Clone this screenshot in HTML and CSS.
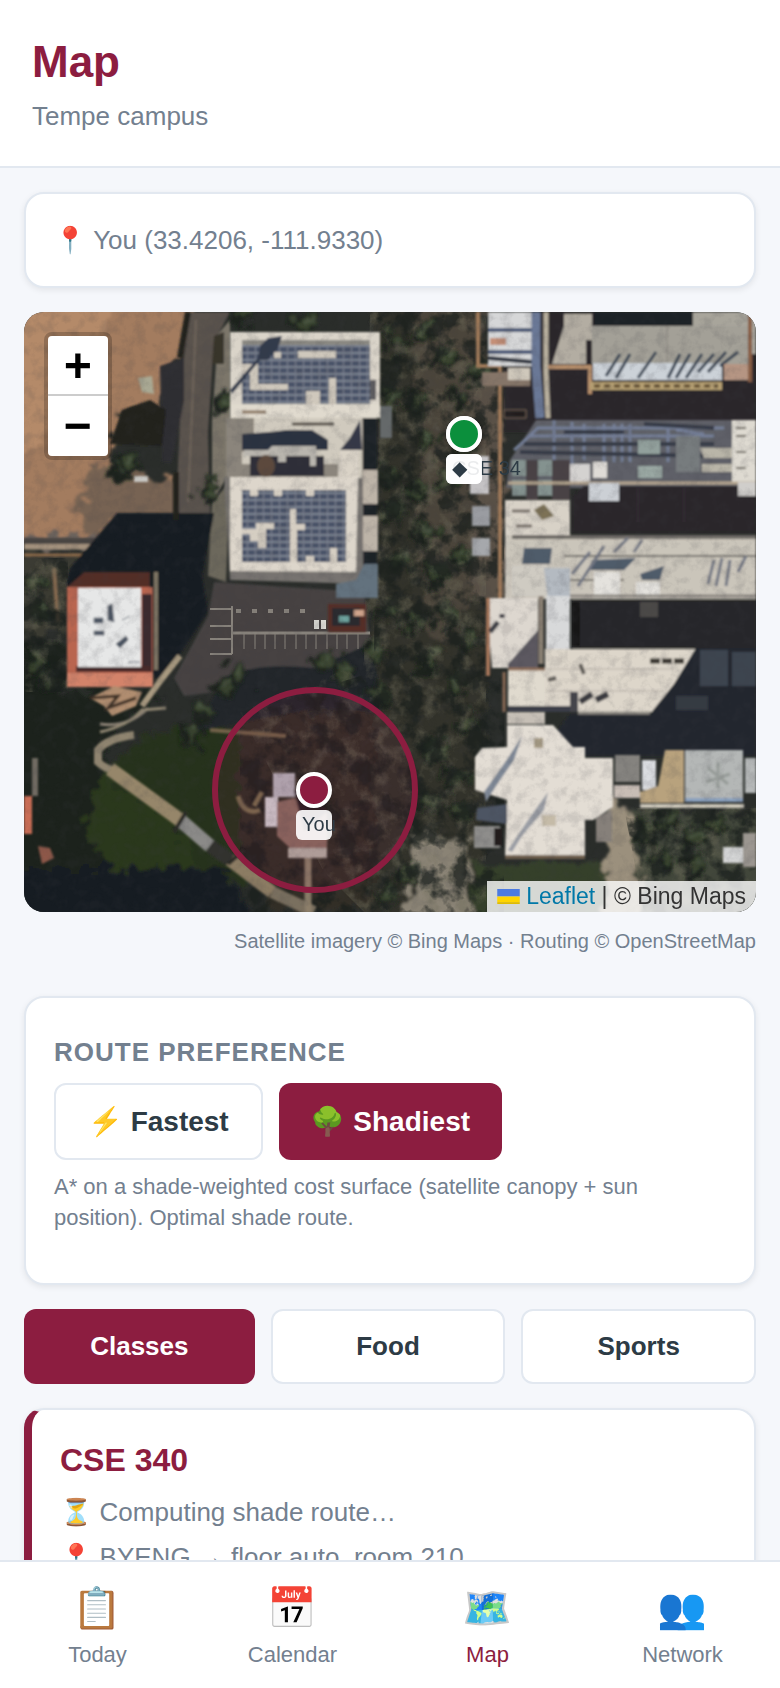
FILE: index.html
```html
<!DOCTYPE html>
<html lang="en">
<head>
    <meta charset="UTF-8">
    <meta name="viewport" content="width=device-width, initial-scale=1.0">
    <title>Map</title>
    <link rel="stylesheet" href="styles.css">
</head>
<body>
    <div class="page">
        <header class="header">
            <h1>Map</h1>
            <p>Tempe campus</p>
        </header>

        <main class="content">
            <div class="card location">📍 You (33.4206, -111.9330)</div>

            <div class="map">
                <svg class="map-tiles" viewBox="0 0 732 600" preserveAspectRatio="xMidYMid slice" aria-hidden="true">
                    <defs>
                        <pattern id="panels" width="8" height="7" patternUnits="userSpaceOnUse">
                            <rect width="8" height="7" fill="#7d8492"/>
                            <rect width="7" height="5" fill="#4a5368"/>
                        </pattern>
                        <filter id="rough" x="-5%" y="-5%" width="110%" height="110%">
                            <feTurbulence type="fractalNoise" baseFrequency="0.07" numOctaves="4" seed="4" result="n"/>
                            <feDisplacementMap in="SourceGraphic" in2="n" scale="30" xChannelSelector="R" yChannelSelector="G"/>
                            <feGaussianBlur stdDeviation="1.5"/>
                        </filter>
                        <filter id="soft" x="-5%" y="-5%" width="110%" height="110%">
                            <feGaussianBlur stdDeviation="0.8"/>
                        </filter>
                        <filter id="grain" x="0" y="0" width="100%" height="100%">
                            <feTurbulence type="fractalNoise" baseFrequency="0.09" numOctaves="4" seed="2"/>
                            <feColorMatrix values="0 0 0 0 0.05  0 0 0 0 0.05  0 0 0 0 0.06  3 0 0 0 -1.3"/>
                        </filter>
                        <filter id="leaves" x="0" y="0" width="100%" height="100%" color-interpolation-filters="sRGB">
                            <feTurbulence type="fractalNoise" baseFrequency="0.06" numOctaves="5" seed="7" result="n"/>
                            <feColorMatrix values="0 0 0 0 0.44  0 0 0 0 0.43  0 0 0 0 0.36  0 3.2 0 0 -1.5" result="c"/>
                            <feComposite in="c" in2="SourceGraphic" operator="in"/>
                        </filter>
                        <filter id="shade" x="0" y="0" width="100%" height="100%" color-interpolation-filters="sRGB">
                            <feTurbulence type="fractalNoise" baseFrequency="0.045" numOctaves="4" seed="21" result="n"/>
                            <feColorMatrix values="0 0 0 0 0.1  0 0 0 0 0.12  0 0 0 0 0.11  0 5 0 0 -2.3" result="c"/>
                            <feComposite in="c" in2="SourceGraphic" operator="in"/>
                        </filter>
                        <g id="tree">
                            <circle r="12" fill="#1c241f"/>
                            <circle cx="2" cy="-2" r="8" fill="#37432f"/>
                            <circle cx="3" cy="-4" r="3" fill="#4a5541"/>
                        </g>
                        <g id="car" fill="#d9d8d2"><rect width="5" height="9"/></g>
                    </defs>

                    <rect width="732" height="600" fill="#2a2d2a"/>

                    <!-- ground -->
                    <g filter="url(#rough)">
                        <path d="M-20-20H172L160 48 144 56 136 92 104 92 88 128 84 150 104 164 152 166 152 208 104 206 84 226 -20 230Z" fill="#a37c5f"/>
                        <path d="M-20-20H100L60 60 30 120-20 150Z" fill="#b48a69"/>
                        <path d="M70 150 150 170 150 206 100 206 70 226 50 200Z" fill="#776353"/>
                        <path d="M-20 224H84L70 236H-20Z" fill="#6a625c"/>
                        <path d="M-20 244H60L46 270 42 320-20 330Z" fill="#3b3a30"/>
                        <path d="M-20 330H44V380L140 380 100 410 80 440 80 600H-20Z" fill="#1d231f"/>
                        <path d="M82 455 130 420 220 412 256 440 250 560 150 590 70 540Z" fill="#26301f"/>
                        <path d="M76 460 150 510 176 560 90 570 60 520Z" fill="#29371f"/>
                        <path d="M0 556H200L240 620H-20Z" fill="#171c20"/>
                        <path d="M216 400H400V600H250L216 540Z" fill="#302e27"/>
                        <path d="M350-20H460V620H350Z" fill="#30312b"/>
                        <path d="M386-20H464V100L450 190 470 230 440 300 420 340 400 300 396 100Z" fill="#4b453a"/>
                        <path d="M446 60H480V290H450Z" fill="#5a5147"/>
                        <path d="M395 520 440 530 446 610H380Z" fill="#8a8374"/>
                        <path d="M446 550H590V610H446Z" fill="#35402a"/>
                        <path d="M585 480 608 500 620 610H580Z" fill="#9b907d"/>
                        <path d="M606 498H740V610H620Z" fill="#42463a"/>
                    </g>

                    <!-- streets and long shadows -->
                    <g filter="url(#soft)">
                        <path d="M166 0H206L190 30 184 120 186 202H152L158 60Z" fill="#5a534d"/>
                        <path d="M172 8 164 190" stroke="#6f655a" stroke-width="2" fill="none"/>
                        <path d="M194 22 206 8V160L188 190 188 110Z" fill="#7c766a"/>
                        <path d="M190 24 200 20V52H188Z" fill="#39342b"/>
                        <path d="M188 190 206 170 202 270 184 264Z" fill="#6c675c"/>
                        <path d="M0 234H92" stroke="#a3917d" stroke-width="7"/>
                        <path d="M0 229H92" stroke="#4a4442" stroke-width="6"/>
                        <path d="M0 243H70" stroke="#8d6b4a" stroke-width="3"/>
                        <path d="M136 54 160 46 160 88 148 150H138Z" fill="#2e2d33"/>
                        <path d="M164 0 156 46" stroke="#20221f" stroke-width="6"/>
                        <path d="M98 98 126 88 142 98 138 134 86 132Z" fill="#20211f"/>
                        <path d="M93 201H190L178 264 184 300 136 372 128 360V276L42 274 46 256Z" fill="#191d22"/>
                        <path d="M152 160V208" stroke="#24211f" stroke-width="6"/>
                        <path d="M190 270 340 280 350 360 160 384 150 366 184 304Z" fill="#464343"/>
                        <path d="M30 256 34 310" stroke="#85694f" stroke-width="4"/>
                        <path d="M132 260V358" stroke="#7e7464" stroke-width="4"/>
                        <path d="M156 344 134 372 118 394" stroke="#a89a80" stroke-width="6" fill="none"/>
                        <path d="M114 66 128 64 130 82 118 80Z" fill="#a9a893"/>
                        <path d="M110 164H124V170H110Z" fill="#c7c6c2"/>
                        <path d="M200 366Q230 350 290 356L350 330 356 400 290 396 170 420Z" fill="#22272a"/>
                    </g>

                    <!-- trees -->
                    <g filter="url(#rough)">
                        <use href="#tree" x="98" y="156"/><use href="#tree" x="106" y="150"/>
                        <use href="#tree" x="202" y="90"/><use href="#tree" x="184" y="180"/>
                        <use href="#tree" x="280" y="10"/><use href="#tree" x="220" y="6"/>
                        <use href="#tree" x="10" y="350"/><use href="#tree" x="26" y="370"/>
                        <use href="#tree" x="12" y="270"/><use href="#tree" x="16" y="300"/>
                        <use href="#tree" x="200" y="375"/><use href="#tree" x="214" y="362"/>
                        <use href="#tree" x="180" y="400"/><use href="#tree" x="166" y="420"/>
                        <use href="#tree" x="300" y="350"/><use href="#tree" x="320" y="360"/>
                        <use href="#tree" x="350" y="340"/><use href="#tree" x="356" y="380"/>
                        <use href="#tree" x="372" y="30"/><use href="#tree" x="366" y="90"/>
                        <use href="#tree" x="364" y="160"/><use href="#tree" x="368" y="200"/>
                        <use href="#tree" x="376" y="250"/><use href="#tree" x="364" y="300"/>
                        <use href="#tree" x="400" y="20"/><use href="#tree" x="424" y="44"/>
                        <use href="#tree" x="396" y="88"/><use href="#tree" x="436" y="84"/>
                        <use href="#tree" x="404" y="130"/><use href="#tree" x="392" y="180"/>
                        <use href="#tree" x="424" y="168"/><use href="#tree" x="400" y="220"/>
                        <use href="#tree" x="436" y="244"/><use href="#tree" x="410" y="262"/>
                        <use href="#tree" x="390" y="310"/><use href="#tree" x="424" y="304"/>
                        <use href="#tree" x="446" y="326"/><use href="#tree" x="404" y="350"/>
                        <use href="#tree" x="432" y="374"/><use href="#tree" x="442" y="412"/>
                        <use href="#tree" x="410" y="440"/><use href="#tree" x="430" y="468"/>
                        <use href="#tree" x="404" y="488"/><use href="#tree" x="436" y="500"/>
                        <use href="#tree" x="384" y="560"/><use href="#tree" x="364" y="586"/>
                        <use href="#tree" x="620" y="520"/><use href="#tree" x="644" y="510"/>
                        <use href="#tree" x="668" y="524"/><use href="#tree" x="690" y="514"/>
                        <use href="#tree" x="640" y="548"/><use href="#tree" x="670" y="554"/>
                        <use href="#tree" x="440" y="140"/><use href="#tree" x="454" y="60"/>
                    </g>
                    <g filter="url(#leaves)" opacity="0.45">
                        <path d="M346 0H462V600H340L300 560 216 400 340 350Z"/>
                        <path d="M600 496H732V600H620Z"/>
                        <path d="M0 246H44V380H0Z"/>
                    </g>
                    <g filter="url(#shade)" opacity="0.75">
                        <path d="M352 0H480V600H216V400L350 360Z"/>
                        <path d="M600 496H732V600H620Z"/>
                        <path d="M0 246H44V380H0Z"/>
                    </g>

                    <!-- solar roofs on the west side -->
                    <g filter="url(#soft)">
                        <path d="M202 106H342V170H202Z" fill="#8b857c"/>
                        <path d="M200 165H340V272L206 268Z" fill="#77736f"/>
                        <rect x="206" y="20" width="150" height="86" fill="#dad4c9"/>
                        <rect x="218" y="33" width="128" height="59" fill="url(#panels)"/>
                        <path d="M218 28H346V33H218Z" fill="#8a8882"/>
                        <path d="M274 39H312V46H274ZM250 40H257V46H250ZM218 52H234V72H264V78H226V62H218ZM305 66H312V92H305ZM282 79H296V92H282Z" fill="#cfc8bc"/>
                        <path d="M206 78 234 46 236 34 244 26 258 24 254 36 244 48 236 48 208 82Z" fill="#333a4c"/>
                        <path d="M346 68H352V88H346Z" fill="#5d5c5e"/>
                        <rect x="206" y="92" width="150" height="14" fill="#e0dace"/>
                        <path d="M218 100H242" stroke="#8a7663" stroke-width="3"/>
                        <path d="M230 106H338V166H314V152H218V140H230Z" fill="#d0cabe"/>
                        <path d="M218 122 246 120 262 118 288 118 304 128 304 138 218 138Z" fill="#2b313f"/>
                        <path d="M226 144H300V164H226Z" fill="#2d2f38"/>
                        <path d="M220 138H244L248 134H292V154H286V144H262V150H254V144H220Z" fill="#b9b5ae"/>
                        <ellipse cx="242" cy="154" rx="9" ry="11" fill="#5c4a3d"/>
                        <path d="M336 108 338 138H316L326 126Z" fill="#343947"/>
                        <path d="M268 112H310" stroke="#56504a" stroke-width="3"/>
                        <path d="M316 138H334V178H316Z" fill="#dad3c7"/>
                        <path d="M206 165H334L332 260 206 259Z" fill="#ddd6cb"/>
                        <rect x="218" y="178" width="104" height="72" fill="url(#panels)"/>
                        <path d="M226 178H234V184H226ZM250 178H258V184H250ZM282 178H290V184H282ZM266 197H272V212H281V218H273V250H266ZM218 217H232V211H250V217H242V236H234V229H226V222H218ZM306 236H313V250H306ZM282 244H290V250H282Z" fill="#d5cec2"/>
                        <rect x="339" y="106" width="14" height="170" fill="#1f2327"/>
                        <rect x="339" y="158" width="15" height="34" fill="#bdb4a8"/>
                        <rect x="339" y="204" width="15" height="35" fill="#bdb4a8"/>
                        <path d="M340 252H354V286H312V272L332 268Z" fill="#64727e"/>
                        <rect x="356" y="94" width="12" height="32" fill="#65696a"/>
                    </g>

                    <!-- red roof -->
                    <g filter="url(#soft)">
                        <path d="M43 275 60 260H126V276H43Z" fill="#532d28"/>
                        <rect x="43" y="275" width="86" height="99" fill="#b9654f"/>
                        <rect x="118" y="282" width="10" height="78" fill="#3b2a2e"/>
                        <rect x="52" y="354" width="74" height="6" fill="#4a2a2a"/>
                        <rect x="43" y="361" width="86" height="14" fill="#d3836a"/>
                        <rect x="54" y="276" width="63" height="79" fill="#e6e7e7"/>
                        <path d="M84 294 88 292 90 310 84 308ZM70 306H79V311H70ZM70 319H80V323H70ZM92 332 102 324 104 328 96 336ZM98 308 106 304M104 350H116" fill="#4a5260" stroke="#6e747e"/>
                        <path d="M66 386 90 374 118 380 112 394 88 404 80 394Z" fill="#b08d6f"/>
                        <path d="M66 386 94 384 84 396 112 386" stroke="#3f3026" stroke-width="3" fill="none"/>
                        <path d="M76 412Q104 416 124 396" stroke="#8d8376" stroke-width="3" fill="none"/>
                        <path d="M142 396 118 398Q104 414 76 420" stroke="#908672" stroke-width="3" fill="none"/>
                        <path d="M0 484H8V522H0Z" fill="#c96d54"/>
                        <rect x="8" y="446" width="6" height="38" fill="#6f6a62"/>
                        <path d="M14 534 26 536 30 546 18 552Z" fill="#8f584a"/>
                    </g>

                    <!-- parking lot -->
                    <g stroke="#87827b" stroke-width="1" fill="none">
                        <path d="M208 294V342M186 297H208M186 314H208M186 327H208M186 342H208" stroke-width="2"/>
                        <path d="M208 321H346" stroke-width="3"/>
                        <path d="M220 322V337M231 322V337M241 322V337M251 322V337M261 322V337M272 322V337M282 322V337M292 322V337M303 322V337M313 322V337M323 322V337M334 322V337"/>
                        <path d="M212 299H292" stroke-width="4" stroke-dasharray="5 11"/>
                    </g>
                    <use href="#car" x="290" y="308"/><use href="#car" x="297" y="308"/>
                    <g filter="url(#soft)">
                        <rect x="304" y="292" width="38" height="28" fill="#572e25"/>
                        <rect x="308" y="296" width="28" height="18" fill="#2c2c2e"/>
                        <path d="M315 304H325V310H315Z" fill="#6fa5a0"/>
                        <path d="M330 298H340V304H330Z" fill="#d0a48c"/>
                    </g>

                    <!-- lawn walk and house -->
                    <g filter="url(#soft)">
                        <path d="M110 423Q84 426 74 438V450Q82 458 92 458" stroke="#8f8470" stroke-width="8" fill="none"/>
                        <path d="M86 457 156 508" stroke="#96866a" stroke-width="14"/>
                        <path d="M156 508 186 534" stroke="#8b8a88" stroke-width="14"/>
                        <path d="M206 548 248 580" stroke="#8c7c63" stroke-width="13"/>
                        <path d="M248 580 290 600" stroke="#7a705f" stroke-width="12"/>
                        <path d="M186 534 206 548" stroke="#33332f" stroke-width="14"/>
                        <path d="M150 520 162 500M204 552 220 538" stroke="#2b2a28" stroke-width="4"/>
                        <path d="M186 418 262 424" stroke="#75644a" stroke-width="4"/>
                        <path d="M230 494 238 480M214 484Q220 504 236 498" stroke="#7c6d50" stroke-width="5" fill="none"/>
                        <rect x="249" y="461" width="22" height="24" fill="#b4b0b8"/>
                        <rect x="241" y="485" width="13" height="30" fill="#d0ccd0"/>
                        <path d="M253 490 270 486 303 500V536H266L253 524Z" fill="#8a6a60"/>
                        <path d="M270 478 292 480 303 500 280 520Z" fill="#2d2426"/>
                        <rect x="264" y="536" width="39" height="10" fill="#b3aba2"/>
                        <path d="M284 546V600" stroke="#8d7f6a" stroke-width="7"/>
                    </g>

                    <!-- north-east roofs -->
                    <g filter="url(#soft)">
                        <path d="M480 0H732V120H480Z" fill="#29272a"/>
                        <path d="M454 0V54H476V290" stroke="#a07a5a" stroke-width="4" fill="none"/>
                        <rect x="464" y="0" width="46" height="54" fill="#d6d7d8"/>
                        <path d="M464 18H508M464 40H512" stroke="#4b5a78" stroke-width="4"/>
                        <path d="M464 46 508 50" stroke="#2b303c" stroke-width="4"/>
                        <path d="M466 26H482V33H466Z" fill="#c48f77"/>
                        <path d="M458 60H506V74H458Z" fill="#857567"/>
                        <path d="M484 56H506V68H484Z" fill="#cfc8bb"/>
                        <path d="M480 98H502V106H480Z" fill="#231d1c" stroke="#7d6b5c"/>
                        <path d="M512 0V54L516 106" stroke="#6b7896" stroke-width="9" fill="none"/>
                        <path d="M522 0V60L524 106" stroke="#b9b09f" stroke-width="5" fill="none"/>
                        <path d="M528 52 540 14V2H568V28H562V52Z" fill="#b3ada2"/>
                        <path d="M568 14H726V52H568Z" fill="#a3a097"/>
                        <path d="M669 0H732V14H669Z" fill="#a8a59b"/>
                        <path d="M728 14H732V42H728Z" fill="#a8a59b"/>
                        <rect x="570" y="0" width="98" height="13" fill="#1f2326"/>
                        <path d="M524 55H566V82" stroke="#b58e6c" stroke-width="4" fill="none"/>
                        <rect x="569" y="51" width="129" height="17" fill="#ccd2d8"/>
                        <path d="M582 64 596 42M592 66 606 42M614 66 632 40M644 66 656 42M652 66 666 42M662 66 678 42M674 60 690 42M684 60 702 40M696 54 714 40" stroke="#3b4655" stroke-width="3"/>
                        <path d="M566 74H698" stroke="#b59f72" stroke-width="8"/>
                        <path d="M570 74H694" stroke="#5c4a2e" stroke-width="3" stroke-dasharray="6 4"/>
                        <rect x="700" y="52" width="24" height="16" fill="#b59583"/>
                        <path d="M726 0V70" stroke="#8a5f45" stroke-width="4"/>
                        <path d="M643 14V51" stroke="#87847c"/>
                    </g>

                    <!-- service roof with pipes -->
                    <g filter="url(#soft)">
                        <path d="M486 148 512 108H732V176H482Z" fill="#5f6067"/>
                        <path d="M490 138 514 116H700M506 124H690M530 108V150M548 110V160M560 112V148M580 112V150M590 112V150M598 112V150M606 112V150M644 114V150M652 118 680 122" stroke="#747f98" stroke-width="3" fill="none"/>
                        <path d="M500 132H690M496 140 690 144M540 120H600M620 112 690 116" stroke="#363a46" stroke-width="4"/>
                        <path d="M502 148H514V188H502ZM528 148H546V188H528Z" fill="#4a4244"/>
                        <path d="M488 148H502V164H488ZM514 148H528V164H514ZM488 168H502V184H488ZM514 168H528V184H514Z" fill="#84928f"/>
                        <rect x="614" y="128" width="22" height="14" fill="#92a09c"/>
                        <rect x="614" y="154" width="24" height="12" fill="#9aa8a3"/>
                        <rect x="652" y="124" width="24" height="36" fill="#777b7e"/>
                        <rect x="546" y="152" width="20" height="20" fill="#d4d2d0"/>
                        <rect x="569" y="150" width="14" height="16" fill="#dedbd6"/>
                        <path d="M676 136H712V146H680ZM678 152H710V160H678Z" fill="#b9b5a8"/>
                        <path d="M708 108H732V172H708Z" fill="#dedad1"/>
                        <path d="M712 116H722M712 124H722M712 140H722M712 156H722" stroke="#6d675f" stroke-width="2"/>
                        <path d="M484 171H732" stroke="#b6a68f" stroke-width="3"/>
                        <rect x="446" y="144" width="19" height="38" fill="#c4c2c4"/>
                        <rect x="448" y="194" width="18" height="20" fill="#9a9ca1"/>
                        <rect x="448" y="226" width="18" height="18" fill="#a6a8ac"/>
                        <path d="M548 184 560 174H732V221H548Z" fill="#2a2629"/>
                        <rect x="565" y="171" width="30" height="18" fill="#ccd0d5"/>
                        <rect x="714" y="170" width="18" height="14" fill="#d0cecb"/>
                        <path d="M614 176V210M660 176V210" stroke="#39333a"/>
                    </g>

                    <!-- long central building -->
                    <g filter="url(#soft)">
                        <rect x="481" y="188" width="65" height="38" fill="#d8d2c7"/>
                        <path d="M510 198 520 192 530 204 518 208Z" fill="#7d7257"/>
                        <path d="M488 199H506M492 214H508" stroke="#77706a" stroke-width="3"/>
                        <rect x="481" y="223" width="251" height="64" fill="#cac5ba"/>
                        <path d="M488 225H732" stroke="#706c67" stroke-width="4"/>
                        <path d="M500 236H528L526 252H498ZM568 248 612 246 600 258H566ZM616 262 640 254 636 268H618Z" fill="#505b6b"/>
                        <path d="M540 244H732M546 268H600" stroke="#77746e" stroke-width="2"/>
                        <path d="M548 262 566 240M554 274 580 234M590 240 604 226M610 240 618 228M684 272 690 248M692 274 698 246M702 274 706 248M714 260 722 244" stroke="#757985" stroke-width="3"/>
                        <rect x="570" y="260" width="26" height="26" fill="#e4e2dd"/>
                        <rect x="612" y="270" width="24" height="16" fill="#e4e2dd"/>
                        <rect x="488" y="254" width="38" height="30" fill="#cfcbc2"/>
                        <path d="M520 256H546V288H524Z" fill="#b4bac1"/>
                        <path d="M546 284H732" stroke="#8c8781" stroke-width="3"/>
                        <path d="M548 288H732V336H548Z" fill="#25252a"/>
                        <path d="M548 290H556V334H548Z" fill="#161618"/>
                        <rect x="616" y="290" width="18" height="15" fill="#4b4946"/>
                        <path d="M462 286H514V356H468Z" fill="#ddd7cf"/>
                        <path d="M464 286V364" stroke="#a5765a" stroke-width="4"/>
                        <path d="M484 352 514 318V356H484Z" fill="#5b5961"/>
                        <path d="M517 284V352" stroke="#8b8074" stroke-width="5"/>
                        <rect x="522" y="284" width="24" height="54" fill="#d8d9da"/>
                        <path d="M474 310 466 320M478 302V306" stroke="#3f4147" stroke-width="5"/>
                        <path d="M521 337H732V400H521Z" fill="#ddd6ca"/>
                        <path d="M523 357H650M522 379H640" stroke="#b7b1a8" stroke-width="1"/>
                        <path d="M626 349H662" stroke="#38342f" stroke-width="5" stroke-dasharray="10 2"/>
                        <path d="M556 390 568 382M572 388 584 382" stroke="#3a3a3f" stroke-width="6"/>
                        <path d="M556 352 560 362M524 368 532 366" stroke="#64605c" stroke-width="4"/>
                        <rect x="484" y="358" width="37" height="36" fill="#e0dace"/>
                        <path d="M484 357H521M480 360V400" stroke="#8d6d57" stroke-width="3"/>
                        <path d="M484 394H546V400H484Z" fill="#3a3d47"/>
                        <path d="M546 380H554V400H546Z" fill="#45454c"/>
                        <path d="M672 336H732V444H556L532 420 546 402H626L650 372Z" fill="#22262d"/>
                        <path d="M676 338H704V374H676ZM708 340H732V374H708Z" fill="#3c444f"/>
                        <path d="M652 384H684V398H652Z" fill="#343b43"/>
                        <path d="M554 401H626" stroke="#8e8a83" stroke-width="3"/>
                    </g>

                    <!-- south-east building -->
                    <g filter="url(#soft)">
                        <path d="M483 400H521V412H483Z" fill="#c6bfb6"/>
                        <path d="M483 413H529L549 435H561V446H589V495L569 508H561V543H481L483 488 451 478V445L458 436 483 435Z" fill="#e3ddd4"/>
                        <path d="M460 480 484 446 498 424 490 448 472 474 462 490Z" fill="#7f8896"/>
                        <path d="M453 496 483 492 483 512 452 508Z" fill="#4d5564"/>
                        <path d="M484 538 504 508 524 480 520 498 498 524 488 540Z" fill="#9a9da4"/>
                        <rect x="510" y="426" width="9" height="10" fill="#a89d86"/>
                        <rect x="518" y="503" width="14" height="11" fill="#c5bba8"/>
                        <path d="M481 545H561" stroke="#70604f" stroke-width="4"/>
                        <path d="M450 514H476V536H450Z" fill="#8e8d8b"/>
                        <path d="M470 516H478V534H470Z" fill="#241e1c"/>
                        <path d="M572 506 588 498V530H572Z" fill="#86807a"/>
                        <rect x="591" y="443" width="25" height="27" fill="#85837f"/>
                        <rect x="618" y="448" width="14" height="30" fill="#dadce0"/>
                        <rect x="590" y="473" width="26" height="13" fill="#c8bdb5"/>
                        <path d="M641 438H660V491H616V480L634 474Z" fill="#b8a27d"/>
                        <rect x="661" y="438" width="58" height="50" fill="#b4b7b6"/>
                        <path d="M694 450V476M682 470 706 462M684 456 704 472" stroke="#969b98" stroke-width="3"/>
                        <path d="M661 488H719" stroke="#8aa0be" stroke-width="4"/>
                        <path d="M616 494H720" stroke="#cfc9bc" stroke-width="4"/>
                        <path d="M721 446H732V481H721Z" fill="#b6b9b9"/>
                        <rect x="699" y="535" width="22" height="16" fill="#d5d6d6"/>
                        <rect x="719" y="521" width="13" height="34" fill="#9b9690"/>
                    </g>

                    <rect width="732" height="600" filter="url(#grain)" opacity="0.13"/>

                    <circle cx="291" cy="478" r="100" fill="#8c1d40" fill-opacity="0.1" stroke="#8c1d40" stroke-width="6"/>
                </svg>

                <div class="zoom">
                    <button type="button" aria-label="Zoom in">+</button>
                    <button type="button" aria-label="Zoom out">−</button>
                </div>

                <div class="marker marker-class">
                    <span class="dot dot-green"></span>
                    <span class="marker-label">CSE 34</span>
                </div>
                <div class="marker marker-class">
                    <span class="dot dot-green"></span>
                    <span class="marker-label">◆</span>
                </div>
                <div class="marker marker-you">
                    <span class="dot dot-maroon"></span>
                    <span class="marker-label">You</span>
                </div>

                <div class="attribution">
                    <svg class="flag" viewBox="0 0 12 8" aria-hidden="true"><path fill="#4C7BE1" d="M0 0h12v4H0z"/><path fill="#FFD500" d="M0 4h12v3H0z"/><path fill="#E0BC00" d="M0 7h12v1H0z"/></svg>
                    <a href="#leaflet">Leaflet</a> | © Bing Maps
                </div>
            </div>
            <p class="credits">Satellite imagery © Bing Maps · Routing © OpenStreetMap</p>

            <section class="card route">
                <h2>Route preference</h2>
                <div class="route-options">
                    <button type="button" class="option">⚡ Fastest</button>
                    <button type="button" class="option active">🌳 Shadiest</button>
                </div>
                <p>A* on a shade-weighted cost surface (satellite canopy + sun position). Optimal shade route.</p>
            </section>

            <div class="tabs">
                <button type="button" class="tab active">Classes</button>
                <button type="button" class="tab">Food</button>
                <button type="button" class="tab">Sports</button>
            </div>

            <article class="card class-card">
                <h3>CSE 340</h3>
                <p>⏳ Computing shade route…</p>
                <p>📍 BYENG → floor auto, room 210</p>
            </article>
        </main>

        <nav class="nav">
            <a href="#today"><span class="nav-icon">📋</span>Today</a>
            <a href="#calendar"><span class="nav-icon">📅</span>Calendar</a>
            <a href="#map" class="current"><span class="nav-icon">🗺️</span>Map</a>
            <a href="#network"><span class="nav-icon">👥</span>Network</a>
        </nav>
    </div>
</body>
</html>
```

FILE: styles.css
```css
* { box-sizing: border-box; margin: 0; padding: 0; }
body { font-family: "Liberation Sans", Arial, "Noto Color Emoji", sans-serif; font-size: 26px; line-height: 36px; background: #f5f7fb; color: #2d3b45; }
button { font-family: inherit; cursor: pointer; }

.page { display: flex; flex-direction: column; height: 100vh; }

.header { flex-shrink: 0; padding: 32px; background: #fff; border-bottom: 2px solid #e2e8f0; }
.header h1 { font-size: 44px; line-height: 60px; color: #8c1d40; }
.header p { margin-top: 6px; color: #73808f; }

.content { flex: 1; min-height: 0; padding: 24px 24px 0; overflow-y: auto; scrollbar-width: none; }

.card { margin-bottom: 24px; padding: 28px; background: #fff; border: 2px solid #e2e8f0; border-radius: 20px; box-shadow: 0 2px 6px rgba(0, 0, 0, 0.08); }
.location { color: #73808f; }

/* map */
.map { position: relative; height: 600px; border-radius: 20px; overflow: hidden; font-size: 23px; }
.map-tiles { display: block; width: 100%; height: 100%; }

.zoom { position: absolute; top: 20px; left: 20px; border: 4px solid rgba(0, 0, 0, 0.2); border-radius: 8px; }
.zoom button { display: block; width: 60px; height: 60px; padding-top: 6px; background: #fff; border: none; font: bold 48px/54px "Liberation Mono", monospace; color: #000; }
.zoom button:first-child { border-bottom: 2px solid #ccc; border-radius: 4px 4px 0 0; }
.zoom button:last-child { border-radius: 0 0 4px 4px; }

.marker { position: absolute; width: 36px; }
.marker-class { top: 104px; left: 422px; }
.marker-you { top: 460px; left: 272px; }
.dot { display: block; width: 36px; height: 36px; border: 4px solid #fff; border-radius: 50%; box-shadow: 0 2px 6px rgba(0, 0, 0, 0.3); }
.dot-green { background: #0b8f3c; }
.dot-maroon { background: #8c1d40; }
.marker-label { display: block; margin-top: 2px; padding: 0 6px; height: 30px; font-size: 20px; line-height: 28px; white-space: nowrap; background: rgba(255, 255, 255, 0.9); border-radius: 6px; }

.attribution { position: absolute; right: 0; bottom: 0; padding: 0 10px; line-height: 31px; color: #333; background: rgba(255, 255, 255, 0.8); }
.attribution a { color: #0078a8; text-decoration: none; }
.flag { width: 23px; height: 15px; }

.credits { margin-top: 14px; margin-bottom: 40px; font-size: 20px; line-height: 30px; text-align: right; color: #73808f; }

/* route preference */
.route { padding-top: 34px; }
.route h2 { font-size: 26px; line-height: 40px; letter-spacing: 1px; text-transform: uppercase; color: #73808f; }
.route-options { display: flex; gap: 16px; margin: 11px 0; }
.route p { margin-bottom: 22px; font-size: 22px; line-height: 31px; color: #73808f; }

.option, .tab { background: #fff; color: #2d3b45; font-weight: bold; border: 2px solid #e2e8f0; border-radius: 12px; }
.option { padding: 20px 32px; font-size: 28px; line-height: 33px; }
.active { background: #8c1d40; color: #fff; border: none; }

.tabs { display: flex; gap: 16px; margin-bottom: 24px; }
.tab { flex: 1; padding: 20px 12px; font-size: 26px; line-height: 31px; }

.class-card { border-left: 8px solid #8c1d40; }
.class-card h3 { margin-bottom: 12px; font-size: 32px; line-height: 44px; color: #8c1d40; }
.class-card p { margin-bottom: 9px; color: #73808f; }

/* bottom nav */
.nav { display: flex; flex-shrink: 0; padding: 16px 0; background: #fff; border-top: 2px solid #e2e8f0; }
.nav a { flex: 1; display: flex; flex-direction: column; align-items: center; font-size: 22px; line-height: 34px; text-decoration: none; color: #73808f; }
.nav a.current { color: #8c1d40; }
.nav-icon { font-size: 40px; line-height: 60px; }
```
